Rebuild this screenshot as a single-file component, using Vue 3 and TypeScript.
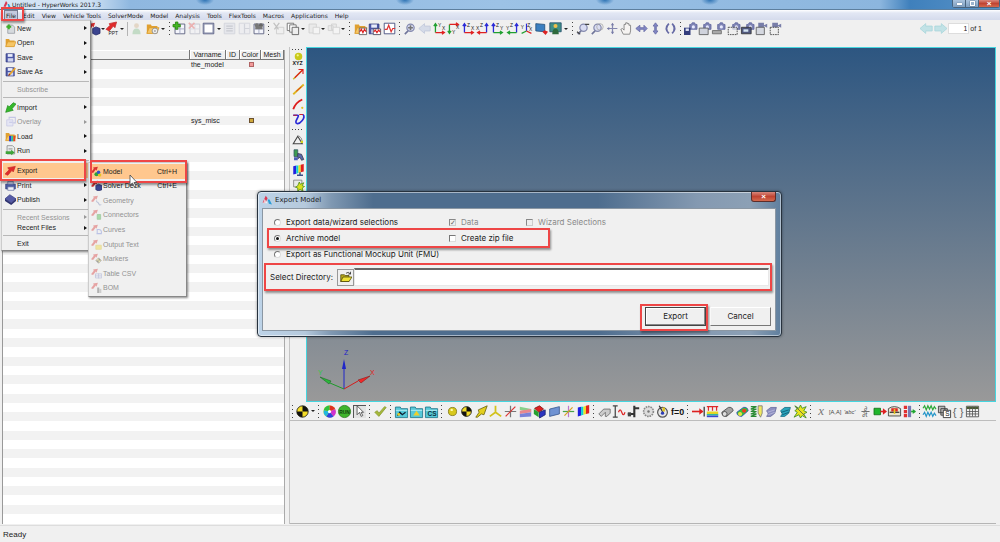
<script setup lang="ts">
import { ref } from 'vue'

const line = (d: string, c = '#333', w = 1.5) =>
  `<path d="${d}" fill="none" stroke="${c}" stroke-width="${w}"/>`
const fill = (d: string, c: string, s = 'none') => `<path d="${d}" fill="${c}" stroke="${s}"/>`

const folder =
  fill('M1 3h5l1 2h7v9H1z', '#e0a030') + fill('M1 14l3-7h12l-3 7z', '#f6c665', '#d99a2c')
const floppy =
  fill('M1.5 2.5h12v12h-12z', '#4c57a8', '#343d80') + fill('M4 3h7v4H4z', '#e8ecfa') + fill('M4 9h8v5H4z', '#cfd5ee')
const redArrow = fill('M0 13L6 7 4 4 15 2 12 10 10 8 4 15z', '#e02a2a', '#c43030')
const smallRed = fill('M0 9L4 4 3 2 10 1 8 7 7 5 3 10z', '#d93333')
const page = fill('M2.5 2.5h12v12h-12z', '#f4f5fb', '#4d5474') + line('M2.5 8.5h12M8.5 2.5v12', '#9aa0bd', 1)
const lens = '<circle cx="8" cy="7" r="4.5" fill="#d9dcf2" stroke="#858aae" stroke-width="1.5"/>' + line('M5 11L1 15', '#70759a', 2)
const cam =
  fill('M7 3h2l1-2h3l1 2h2v6H7z', '#7f84b4', '#6066a0') + '<circle cx="11.5" cy="6" r="2" fill="#e8eaff"/>'
const cyanFolder = fill('M.5 2.5h6l1 2h8v11H.5z', '#57c8d8', '#1c7387') + fill('M1 6h14v1H1z', '#c4f4f8')
const rainbow =
  fill('M1 3l4-1v11l-4 1z', '#2020e0') + fill('M5 2l3 0v10l-3 1z', '#12d0d0') + fill('M8 2l3-1v10l-3 1z', '#f0e020') + fill('M11 1l4-1v10l-4 1z', '#e02020')
const checker = (r: number) =>
  `<circle cx="8" cy="8" r="${r}" fill="#f4dc28" stroke="#111"/>` +
  fill(`M8 8V${8 - r}A${r} ${r} 0 0 1 ${8 + r} 8z`, '#111') + fill(`M8 8V${8 + r}A${r} ${r} 0 0 1 ${8 - r} 8z`, '#111')
const tx = (t: string, x: number, y: number, s = 6, c = '#222', extra = '') =>
  `<text x="${x}" y="${y}" font-size="${s}" fill="${c}" font-family="Liberation Sans, sans-serif" ${extra}>${t}</text>`
const axes = (corner: [number, number], a: string, b: string, ca: string, cb: string) => {
  const [x, y] = corner
  const vy = y > 8 ? 2 : 14
  const hx = x < 8 ? 14 : 2
  const dy = y > 8 ? 3 : -3
  const dx = x < 8 ? -3 : 3
  return (
    line(`M${x} ${y}V${vy}M${x - 2} ${vy + dy}L${x} ${vy}L${x + 2} ${vy + dy}`, ca, 1.6) +
    line(`M${x} ${y}H${hx}M${hx + dx} ${y - 2}L${hx} ${y}L${hx + dx} ${y + 2}`, cb, 1.6) +
    tx(a, x < 8 ? 6 : 5, y > 8 ? 6 : 15, 6) + tx(b, x < 8 ? 11 : 0, y > 8 ? 10 : 9, 6)
  )
}

const icons: Record<string, string> = {
  new: fill('M4 3h7l3 3v9H4z', '#d6dade', '#8a9096') + fill('M2 4h2V2h3v2h2v3H7v2H4V7H2z', '#3fae2a'),
  open: folder,
  save: floppy,
  saveas: floppy + line('M6 13L15 3', '#e6a32c', 2.6) + line('M5 14l2-2', '#8a2d1c', 2),
  import: fill('M16 3L10 10 12 12 1 15 4 5 6 7 12 1z', '#35b82b', '#1e8c19'),
  overlay: fill('M2.5 5.5h9v9h-9z', '#d6d8fb', '#8589d6') + line('M6 5V2h9v8h-3M6 9h5', '#8589d6'),
  load: folder + fill('M6 7h3v8H6z', '#2233dd') + fill('M9 7h3v8H9z', '#26c0a5') + fill('M12 7h3v8h-3z', '#e24a1f'),
  run: fill('M3 1h8l3 3v9H3z', '#eceff0', '#777') + line('M5 5h6M5 7h6', '#999', 1) + fill('M1 9h8V7l5 4-5 4v-2H1z', '#3fa33a'),
  export: redArrow,
  print: fill('M1 6h14v7H1z', '#4b5ba3', '#303c77') + fill('M4 2h8v4H4z', '#c9cfe8', '#66709d') + fill('M4 10h9v5H4z', '#eef0fa', '#66709d'),
  publish: fill('M0 7L7 1l9 6-7 6z', '#565ba6', '#393d80') + fill('M0 7l9 6 7-6v3l-7 6L0 10z', '#2f3370'),
  xmodel: smallRed + '<circle cx="8" cy="12" r="3" fill="#2da33a"/><circle cx="12.500" cy="13" r="2.600" fill="#e6c321"/><circle cx="11" cy="9" r="2.500" fill="#3151cc"/>',
  xsolver: smallRed + fill('M7 8l4-2 5 2v6l-5 2-4-2z', '#3b448f', '#272e6b'),
  xgeom: smallRed + line('M8 8c0 4 2 1 3 4s2 3 4 2', '#6d7fb5'),
  xconn: smallRed + fill('M9 8h5v7H9z', '#3dbb3d', '#1d881d'),
  xcurve: smallRed + line('M9 15V8h2q5 0 4 6H8', '#6d7fd5'),
  xtext: smallRed + fill('M7 9h8v6H7z', '#f0d62a', '#d1b61a'),
  xmark: smallRed + fill('M11 7l4 4-4 4-4-4z', '#f0e24a', '#555') + fill('M11 7v4h4zM11 15v-4H7z', '#222'),
  xtable: smallRed + fill('M6.500 8.500h9v6h-9z', '#eceffc', '#6d78b8') + line('M6 11.500h9M11 8v7', '#6d78b8', 1),
  xbom: smallRed + fill('M9 8h3v8H9z', '#555') + fill('M12 10h3v6h-3z', '#999'),
  ppt: fill('M0 9L5 4 4 2 13 0 11 7 9 5 4 11z', '#e02a2a', '#c43030') + tx('PPT', 3, 16, 6, '#222'),
  user: '<circle cx="8" cy="4.500" r="3" fill="#c79c67"/>' + fill('M3 15q0-7 5-7t5 7z', '#5fae68'),
  foldergear: folder + '<circle cx="11" cy="11" r="3.500" fill="#eee" stroke="#888"/><circle cx="11" cy="11" r="1" fill="#777"/>',
  pageadd: page + fill('M3 0h3v3h3v3H6v3H3V6H0V3h3z', '#43b621', '#2b8510'),
  pagedel: page + line('M1 1l7 7M8 1L1 8', '#e02222', 2),
  square: fill('M1.500 1.500h13v13h-13z', '#fff', '#3d4470') + line('M2.500 2.500h11v11h-11z', '#707798', 1),
  grid: fill('M1.500 1.500h13v13h-13z', '#cdd1e0', '#8d93ab') + line('M4 5h8M4 8h8M4 11h8', '#6e748c'),
  grid2: fill('M1.500 1.500h13v13h-13z', '#e7e9f2', '#8d93ab') + line('M8 2v12M8 8h6', '#8d93ab'),
  pagefind: page + '<circle cx="6" cy="4" r="2.500" fill="#777"/><circle cx="11" cy="4" r="2.500" fill="#666"/>' + fill('M4 5h9v4H4z', '#777'),
  cut: fill('M5.500 6.500h9v8h-9z', '#eee', '#777') + line('M2 1l6 8M9 1L3 9', '#555'),
  copy: fill('M1.500 1.500h8v9h-8z', '#fff', '#666') + fill('M4.500 3.500h8v9h-8z', '#fff', '#666') + fill('M7.500 6.500h8v9h-8z', '#eee', '#555'),
  paste: fill('M2.500 2.500h9v11h-9z', '#ddd', '#888') + fill('M7.500 6.500h8v8h-8z', '#fff', '#888'),
  multi: fill('M1.500 4.500h6v6h-6zM5.500 2.500h6v7h-6z', '#ddd', '#888') + fill('M7.500 6.500h8v8h-8z', '#fff', '#888'),
  folderwave: folder + fill('M6.500 7.500h9v8h-9z', '#fff', '#555') + line('M7 12l2-3 2 4 2-4 2 3', '#d22'),
  savewave: floppy + fill('M6.500 8.500h9v7h-9z', '#fff', '#445') + line('M7 12l2-2 2 3 2-3 2 2', '#d22'),
  wave: fill('M1.500 1.500h13v13h-13z', '#fff', '#343d73') + line('M2 9l3 0 2-5 3 8 2-4h3', '#e03434'),
  zoomall: lens + fill('M5 6h6v2H5zM7 4h2v6H7z', '#777'),
  back: fill('M1 8l7-6v3h7v6H8v3z', '#d5dbe8', '#c0c8da'),
  prev: fill('M0 8l7-6v3h8v6H7v3z', '#c2e2e6', '#a9d6db'),
  next: fill('M16 8L9 2v3H1v6h8v3z', '#c2e2e6', '#a9d6db'),
  ax1: axes([3, 13], 'Y', 'X', '#20a030', '#e02020'),
  ax2: axes([3, 3], 'Y', 'X', '#20a030', '#e02020'),
  ax3: axes([3, 13], 'Z', 'X', '#2a2ad8', '#e02020'),
  ax4: axes([13, 13], 'Z', 'X', '#2a2ad8', '#e02020'),
  ax5: axes([3, 13], 'Z', 'Y', '#2a2ad8', '#20a030'),
  ax6: axes([13, 13], 'Z', 'Y', '#2a2ad8', '#20a030'),
  ax7: line('M8 11V2', '#2a2ad8') + line('M8 11l-6 3', '#20a030') + line('M8 11l6 3', '#e02020') + tx('Y', 1, 9) + tx('Z', 9, 6) + tx('X', 11, 11),
  paint: fill('M1 2l11 1v9L1 11z', '#3b7fc0', '#234f7a') + fill('M9 12l3-2 4 2-3 4z', '#dd2222'),
  screen: fill('M1 1h14v11H1z', '#3f8f86', '#25506e') + '<circle cx="8" cy="5" r="2.500" fill="#f0c04a"/>' + fill('M4 15q0-7 4-7t4 7z', '#2f6a3c'),
  zoomin: lens + line('M0 12l4 3M10 3h5', '#444'),
  zoomout: lens + '<circle cx="11" cy="6" r="4" fill="none" stroke="#aaa"/>',
  pan: line('M8 2v12M2 8h12', '#8487b0') + fill('M8 1l2 3H6zM8 15l2-3H6zM1 8l3-2v4z', '#777ba6'),
  hand: fill('M4 15L1 9l2-1 2 2V3h2V1h2v1h2v2h2v7l-1 4z', '#f6f4f2', '#777'),
  horiz: fill('M1 8l5-4v3h5V4l4 4-4 4V9H6v3z', '#8287c4', '#666aa5'),
  vert: fill('M8 1l3 4H9v6h2l-3 4-3-4h2V5H5z', '#8287c4', '#666aa5'),
  rotate: line('M6 2Q0 8 6 14M10 2q6 6 0 12', '#666aa5', 2.2),
  cam1: cam + fill('M0 7h8v9H0z', '#333d7d') + fill('M2 8h4v3H2z', '#dfe3f5'),
  cam2: cam + fill('M1.500 7.500h11v8h-11z', '#d0d3dc', '#555'),
  cam3: cam + fill('M.5 10.500h11v4H.5z', '#aaa', '#666'),
  cam4: cam + '<rect x="1.500" y="6.500" width="11" height="9" fill="#eee" fill-opacity=".7" stroke="#333" stroke-dasharray="2 1"/>',
  cam5: cam + fill('M.5 6.500h12v8H.5z', '#51587f', '#333') + fill('M3 9h6v3H3z', '#d3e4f2'),
  cam6: fill('M4 1h7v3l4-2v5l-4-2v2H4z', '#787da8') + fill('M1.500 6.500h10v9h-10z', '#d5d8e0', '#555'),
  cam7: fill('M4 1h7v3l4-2v5l-4-2v2H4z', '#787da8') + '<rect x="1.500" y="6.500" width="10" height="9" fill="#eee" stroke="#333" stroke-dasharray="2 1"/>',
  xyz: '<circle cx="8" cy="4.500" r="5" fill="#c9c91b"/><circle cx="7" cy="3" r="1.500" fill="#f6f68a"/>' + tx('XYZ', 0, 16, 7, '#111', 'font-weight="bold"'),
  vec: line('M1 15L13 3', '#c9b820', 2) + line('M3 13L14 2M8 2h6v6', '#dd2222'),
  seg: line('M1 15L15 2', '#e0b820', 2.4) + line('M5 11L12 5', '#dd2222', 1.2),
  arc: line('M1 15Q4 6 13 2', '#dd1c1c', 2.4) + '<circle cx="13" cy="13" r="1.500" fill="#e0c020"/>',
  curve: line('M1 3h6Q9 3 6 8T6 14t7-4 1-8', '#2b2bd6', 2.2) + line('M1 3h5M14 2H9', '#cc2233', 1.6),
  angle: line('M1 13L7 3l6 10z', '#444') + line('M8 2q5 3 5 8', '#777', 1) + fill('M11 9l3 0v3h-3z', '#d7d721'),
  blocks: fill('M2 1h5v9H2z', '#3d9d50', '#356') + fill('M7 6l5 1 3 7-3 1-2-4-3 2z', '#596aac', '#334') + fill('M2 11h5v4H2z', '#4c5fb5'),
  display: rainbow + line('M10 11v4M6 15h8', '#3a4e87', 2),
  magic: fill('M1.500 1.500h11v9h-11z', '#e7e9e7', '#777') + fill('M9 4l1.500 3L15 5l-2 4 3 1-3 2 1 4-4-2-3 2 0-4-3-1 3-2z', '#d9e020', '#4a8a10'),
  solid: checker(7),
  wheel: '<circle cx="8" cy="8" r="7.500" fill="#e8e020"/>' + fill('M8 8V0.500A7.500 7.500 0 0 1 15 5z', '#e03020') + fill('M8 8L15 5A7.500 7.500 0 0 1 13 14z', '#d030d0') + fill('M8 8L13 14A7.500 7.500 0 0 1 4 14z', '#3040e0') + fill('M8 8L4 14A7.500 7.500 0 0 1 1 6z', '#20b8e0') + fill('M8 8L1 6A7.500 7.500 0 0 1 8 .5z', '#30c040') + '<circle cx="8" cy="8" r="2" fill="#fff"/>',
  run2: '<circle cx="8" cy="8" r="7.500" fill="#3fb52c" stroke="#2a7a1c"/>' + tx('RUN', 1.5, 10.5, 6, '#114010', 'font-weight="bold"'),
  pointer: fill('M5 1v11l3-3 2 5 2-1-2-4h3z', '#fff', '#444'),
  check: fill('M1 9l3-2 2 3 7-8 2 1L6 14z', '#a5b83a', '#8b9c30'),
  cy1: cyanFolder + line('M3 13l3-4 3 3 4-3', '#123', 1.6) + fill('M3 10h3v3H3z', '#f0d020'),
  cy2: cyanFolder + fill('M8 7l4 6H4z', '#f2cf28'),
  cy3: cyanFolder + tx('CS', 3, 14, 8, '#0d3340', 'font-weight="bold"'),
  ball: '<circle cx="8" cy="8" r="5" fill="#d8c81c" stroke="#7d7410"/><circle cx="7" cy="6" r="1.500" fill="#fffbb0"/>',
  ball2: checker(6),
  yarrow: fill('M1 15l4-6-1-3L15 1 11 12l-3-1-5 4z', '#e3cf1f', '#6a6210'),
  tri: line('M8 1v8M8 9l-7 5M8 9l7 5', '#d2c21d', 2.2),
  cross: line('M1 8h14M8 1v14', '#777') + line('M2 14L14 2', '#dd3333'),
  planes: fill('M1 2l14 3v4L1 6z', '#88d08a') + fill('M1 7l14-2v4L1 11z', '#e8878e') + fill('M1 11l14-2v5L1 15z', '#7a82d8'),
  cube: fill('M2 4l6-3 5 4-6 4z', '#dd2020', '#801010') + fill('M1 5l6 4v6l-6-4z', '#24a030') + fill('M8 9l7-3v6l-7 4z', '#2b34c0', '#15206a'),
  plane: fill('M2 5l12-3v9L2 14z', '#6f92d2', '#39588f'),
  multiax: line('M8 1v14', '#bb77cc') + line('M1 8h14', '#49a349') + line('M3 13L13 3', '#d8a020'),
  rain: rainbow,
  sect: fill('M1 11l6-6h8v5l-4 4H9V9l-5 5z', '#ccc', '#666'),
  plot: line('M1 1h6M1 15h6M4 1v14', '#444') + line('M8 9q2-6 4 0t4 0', '#dd2222'),
  clamp: line('M9 1v14M9 4h6M1 11h8', '#333', 2.6) + fill('M1 9h4v5H1z', '#444'),
  gear: '<circle cx="8" cy="8" r="6" fill="#ddd" stroke="#888" stroke-dasharray="2 1" stroke-width="2"/><circle cx="8" cy="8" r="1.500" fill="#777"/>',
  timer: '<circle cx="8" cy="9" r="6" fill="#e6e6e6" stroke="#555" stroke-width="1.500"/>' + line('M4 1l5 9', '#333') + fill('M8 3h3v5H8z', '#e0c420') + '<circle cx="8" cy="10" r="2" fill="#2b3bb5"/>',
  f0: tx('f=0', 0, 12, 11, '#111', 'font-weight="bold"'),
  load1: line('M0 8h13', '#dd2020', 2) + fill('M9 4l5 4-5 4z', '#dd2020') + line('M15 2v12', '#333'),
  press: line('M1 2h14M3 2v5M8 2v5M13 2v5', '#dd2a2a') + fill('M1 8h14v4H1z', '#e8d820') + fill('M1 11h14v2H1z', '#30b8a0') + fill('M1 13h14v2H1z', '#3a48d0'),
  cyl: fill('M1 9l8-6q5-1 6 4l-8 7q-6 0-6-5z', '#a3a3a3', '#444') + '<circle cx="4.500" cy="11" r="3" fill="#ddd" stroke="#444"/>',
  cylc: fill('M1 9l8-6q5-1 6 4l-8 7q-6 0-6-5z', '#37c23a', '#3344bb') + '<circle cx="10" cy="7" r="2.500" fill="#ee3a20"/><circle cx="5" cy="11" r="2.500" fill="#e8e040"/>',
  spring: line('M1 2h7L1 5h7L1 8h7l-7 3h7l-7 3h7', '#2a8a34') + fill('M10 1h5v9l-2 5-3-5z', '#f0e860', '#777'),
  shell: fill('M2 7l5-4h7l-2 7-5 4H2l2-3z', '#8c8fc0', '#666a9c') + line('M3 9l9-3M4 12l8-3', '#bbd', 1),
  shell2: fill('M2 7l5-4h7l-2 7-5 4H2l2-3z', '#29a6bd', '#156a80') + line('M3 9l9-3M4 12l8-3', '#0d5570', 1),
  burst: fill('M1 1l5 3 2-4 2 4 5-2-3 5 4 2-4 2 3 5-5-3-2 3-2-4-6 3 4-6-3-2 3-2z', '#e8e41c', '#3c8a20') + line('M2 2l11 11', '#555', 1),
  x: `<text x="4" y="12" font-size="16" font-style="italic" fill="#777" font-family="Liberation Serif, serif">x</text>`,
  aa: tx('[A,A]', 0, 11, 7, '#444'),
  abc: tx("'abc'", 0, 11, 7, '#444', 'font-style="italic"'),
  frac: tx('∂', 6, 7, 8, '#555') + line('M3 8h10', '#555', 1) + tx('∂t', 4, 15, 8, '#555'),
  flow: fill('M0 4h8v8H0z', '#1fb52b', '#127018') + line('M8 8h5', '#dd2020', 2) + fill('M11 4l5 4-5 4z', '#dd2020'),
  gauge: fill('M.5 4.500q7-5 15 0v9H.5z', '#e9e4cd', '#333') + fill('M4 4h8v4H4z', '#dd2525') + line('M2 9h12', '#333') + fill('M7 5h2v6H7z', '#e8c820'),
  bars: fill('M1 1h4v4H1zM1 6h4v4H1zM1 11h4v4H1z', '#e03030') + fill('M6 1h4v14H6z', '#7679b0') + line('M10 8h5', '#1fa530', 2) + fill('M12 5l4 3-4 3z', '#1fa530'),
  waves: line('M0 4l2-3 2 5 2-5 2 4 2-4 2 5 2-4 2 3', '#2eaa3a') + line('M0 12l2-3 2 5 2-5 2 4 2-4 2 5 2-4 2 3', '#2596c8'),
  stack: fill('M.5 1.500h8v8h-8zM3.500 4.500h8v8h-8z', '#bbb', '#333') + fill('M6.500 6.500h9v9h-9z', '#fff', '#222') + tx('S', 9, 14, 8, '#111'),
  braces: tx('{ }', 1, 13, 14, '#666'),
  table: fill('M.5 1.500h15v13H.5z', '#f5f5f5', '#444') + fill('M1 2h14v3H1z', '#4b5b33') + line('M1 8h14M1 11h14M4.500 2v12M8 2v12M11.500 2v12', '#555', 1),
}

interface Item { label: string; icon?: string; off?: boolean; sub?: boolean; keys?: string; hot?: boolean }
const menus = ['File', 'Edit', 'View', 'Vehicle Tools', 'SolverMode', 'Model', 'Analysis', 'Tools', 'FlexTools', 'Macros', 'Applications', 'Help']
const fileMenu: { cls: string; items: Item[] }[] = [
  { cls: 'four', items: [
    { label: 'New', icon: 'new', sub: true }, { label: 'Open', icon: 'open', sub: true },
    { label: 'Save', icon: 'save', sub: true }, { label: 'Save As', icon: 'saveas', sub: true } ] },
  { cls: 'one', items: [{ label: 'Subscribe', off: true }] },
  { cls: 'four', items: [
    { label: 'Import', icon: 'import', sub: true }, { label: 'Overlay', icon: 'overlay', sub: true, off: true },
    { label: 'Load', icon: 'load', sub: true }, { label: 'Run', icon: 'run', sub: true } ] },
  { cls: 'three', items: [
    { label: 'Export', icon: 'export', hot: true }, { label: 'Print', icon: 'print', sub: true },
    { label: 'Publish', icon: 'publish', sub: true } ] },
  { cls: 'two', items: [{ label: 'Recent Sessions', off: true, sub: true }, { label: 'Recent Files', sub: true }] },
  { cls: 'last', items: [{ label: 'Exit' }] },
]
const exportMenu: Item[] = [
  { label: 'Model', icon: 'xmodel', keys: 'Ctrl+H', hot: true },
  { label: 'Solver Deck', icon: 'xsolver', keys: 'Ctrl+E' },
  { label: 'Geometry', icon: 'xgeom', off: true },
  { label: 'Connectors', icon: 'xconn', off: true },
  { label: 'Curves', icon: 'xcurve', off: true },
  { label: 'Output Text', icon: 'xtext', off: true },
  { label: 'Markers', icon: 'xmark', off: true },
  { label: 'Table CSV', icon: 'xtable', off: true },
  { label: 'BOM', icon: 'xbom', off: true },
]

/* ":" grip, "|" rule, "v" drop arrow, "~name" disabled, "=name" pressed */
interface Group { w: number; t: string[] }
const g = (w: number, s: string): Group => ({ w, t: s.split(' ') })
const topBar = [
  g(40, 'xsolver v ppt v'),
  g(41, '| ~user foldergear v'),
  g(99, ': pageadd ~pagedel square v ~grid ~grid2 pagefind'),
  g(81, ': ~cut copy v ~paste v ~multi v'),
  g(50, ': folderwave savewave wave'),
  g(173, ': zoomall back ax1 ax2 ax3 ax4 ax5 ax6 ax7 paint screen v'),
  g(108, ': zoomin zoomout pan hand horiz vert rotate'),
  g(105, ': cam1 cam2 cam3 cam4 cam5 cam6 cam7'),
]
const lowBar = [
  g(26, ': solid v'),
  g(51, ': wheel run2 =pointer'),
  g(21, ': check'),
  g(51, ': cy1 cy2 cy3'),
  g(152, ': ball ball2 yarrow tri cross planes cube plane multiax rain'),
  g(94, ': sect plot clamp gear timer f0'),
  g(123, ': load1 press cyl cylc spring shell shell2 burst'),
  g(109, ': x aa abc frac flow gauge bars'),
  g(63, ': waves stack braces table'),
]
const sideBar = ['xyz', 'vec', 'seg', 'arc', 'curve']
const sideBar2 = ['angle', 'blocks', 'display', 'magic']

const rows = Array.from({ length: 50 }, (_, i) =>
  i === 0 ? { name: 'the_model', color: 'pink' } : i === 6 ? { name: 'sys_misc', color: 'gold' } : { name: '', color: '' })

const mode = ref('archive')
const zip = ref(false)
const data = ref(true)
const wizard = ref(false)
const directory = ref('')
const pageNo = ref('1')
</script>

<template>
  <div class="window">
    <header class="title">
      <svg class="logo" viewBox="0 0 16 16"><path d="M6 1L1 12l4 1 4-8z" fill="#d93a55" /><path d="M9 7l2 7 5 1-4-8z" fill="#2a9ed8" /></svg>
      <h1>Untitled - HyperWorks 2017.3</h1>
      <div class="winbtns">
        <button aria-label="Minimize"><i class="min"></i></button>
        <button aria-label="Restore"><i class="max"></i></button>
        <button class="close" aria-label="Close">×</button>
      </div>
    </header>

    <nav class="menubar">
      <button v-for="m in menus" :key="m" :class="{ active: m === 'File' }">{{ m }}<span v-if="m === 'File'" class="mark"></span></button>
    </nav>

    <div class="toolbar top">
      <div v-for="(grp, i) in topBar" :key="i" class="group" :style="{ width: grp.w + 'px' }">
        <template v-for="(t, k) in grp.t" :key="k">
          <span v-if="t === ':'" class="grip"></span>
          <span v-else-if="t === '|'" class="rule"></span>
          <button v-else-if="t === 'v'" class="drop" aria-label="More"></button>
          <button v-else class="tool" :class="{ faded: t[0] === '~' }" :aria-label="t">
            <svg viewBox="0 0 16 16" v-html="icons[t.replace('~', '')]"></svg>
          </button>
        </template>
      </div>
      <div class="pager">
        <button class="tool" aria-label="Previous page"><svg viewBox="0 0 16 16" v-html="icons.prev"></svg></button>
        <button class="tool" aria-label="Next page"><svg viewBox="0 0 16 16" v-html="icons.next"></svg></button>
        <input id="page" v-model="pageNo" type="text" />
        <label for="page">of 1</label>
      </div>
    </div>

    <main>
      <section class="browser">
        <table>
          <thead>
            <tr><th class="c1"></th><th class="c2">Varname</th><th class="c3">ID</th><th class="c4">Color</th><th class="c5">Mesh</th></tr>
          </thead>
          <tbody>
            <tr v-for="(r, i) in rows" :key="i">
              <td></td>
              <td>{{ r.name }}</td>
              <td></td>
              <td class="mid"><i v-if="r.color" class="chip" :class="r.color"></i></td>
              <td></td>
            </tr>
          </tbody>
        </table>
      </section>

      <section class="work">
        <div class="stage">
          <div class="side">
            <span class="hgrip"></span>
            <button v-for="s in sideBar" :key="s" class="tool" :aria-label="s"><svg viewBox="0 0 16 16" v-html="icons[s]"></svg></button>
            <span class="hgrip second"></span>
            <button v-for="s in sideBar2" :key="s" class="tool" :aria-label="s"><svg viewBox="0 0 16 16" v-html="icons[s]"></svg></button>
          </div>
          <div class="canvas">
            <svg class="triad" viewBox="0 0 64 48">
              <path d="M28 42V20" stroke="#2026c8" />
              <path d="M28 12l2 10h-4z" fill="#2026c8" />
              <path d="M28 42l14-8" stroke="#d41c1c" />
              <path d="M54 29l-9 7-3-3z" fill="#f02828" stroke="#801010" stroke-width=".5" />
              <path d="M28 42L14 36" stroke="#1d9a2a" />
              <path d="M4 30l11 4-2 3z" fill="#2bb83a" stroke="#125f1a" stroke-width=".5" />
              <text x="28" y="8" fill="#1c22c8">Z</text>
              <text x="2" y="28" fill="#35c745">Y</text>
              <text x="54" y="28" fill="#e02020">X</text>
            </svg>
          </div>
        </div>
        <div class="toolbar low">
          <div v-for="(grp, i) in lowBar" :key="i" class="group" :style="{ width: grp.w + 'px' }">
            <template v-for="(t, k) in grp.t" :key="k">
              <span v-if="t === ':'" class="grip"></span>
              <button v-else-if="t === 'v'" class="drop" aria-label="More"></button>
              <button v-else class="tool" :class="{ pressed: t[0] === '=' }" :aria-label="t">
                <svg viewBox="0 0 16 16" v-html="icons[t.replace('=', '')]"></svg>
              </button>
            </template>
          </div>
        </div>
        <div class="panel"></div>
      </section>
    </main>

    <footer>Ready</footer>

    <div class="menu file" role="menu">
      <div v-for="(sec, i) in fileMenu" :key="i" class="sec" :class="sec.cls">
        <button v-for="it in sec.items" :key="it.label" class="item" :class="{ hot: it.hot }" :disabled="it.off" role="menuitem">
          <span class="ico"><svg v-if="it.icon" viewBox="0 0 16 16" v-html="icons[it.icon]"></svg></span>
          <span class="lbl">{{ it.label }}</span>
          <i v-if="it.sub" class="arrow"></i>
          <span v-if="it.hot" class="mark"></span>
        </button>
      </div>
    </div>

    <div class="menu export" role="menu">
      <button v-for="it in exportMenu" :key="it.label" class="item" :class="{ hot: it.hot }" :disabled="it.off" role="menuitem">
        <span class="ico"><svg v-if="it.icon" viewBox="0 0 16 16" v-html="icons[it.icon]"></svg></span>
        <span class="lbl">{{ it.label }}</span>
        <span v-if="it.keys" class="keys">{{ it.keys }}</span>
        <span v-if="it.hot" class="mark"></span>
      </button>
    </div>
    <svg class="cursor" viewBox="0 0 9 14"><path d="M1 1v10l2.500-2 2 4 1.500-1-2-3.500h3z" fill="#fff" stroke="#444" stroke-width=".8" /></svg>

    <form class="dialog" role="dialog" aria-labelledby="dlg" @submit.prevent>
      <header>
        <svg class="logo" viewBox="0 0 16 16"><path d="M6 1L1 12l4 1 4-8z" fill="#d93a55" /><path d="M4 6l5 7H2z" fill="#fff" opacity=".7" /><path d="M9 7l2 7 5 1-4-8z" fill="#2a9ed8" /></svg>
        <h2 id="dlg">Export Model</h2>
        <button type="button" class="close" aria-label="Close dialog">×</button>
      </header>
      <div class="content">
        <div class="opt">
          <label class="a"><input v-model="mode" type="radio" name="mode" value="data" />Export data/wizard selections</label>
          <label class="b off"><input v-model="data" type="checkbox" disabled />Data</label>
          <label class="off"><input v-model="wizard" type="checkbox" disabled />Wizard Selections</label>
        </div>
        <div class="opt">
          <label class="a"><input v-model="mode" type="radio" name="mode" value="archive" />Archive model</label>
          <label class="b"><input v-model="zip" type="checkbox" />Create zip file</label>
          <span class="mark"></span>
        </div>
        <div class="opt">
          <label class="a"><input v-model="mode" type="radio" name="mode" value="fmu" />Export as Functional Mockup Unit (FMU)</label>
        </div>
        <div class="dir">
          <label for="dir">Select Directory:</label>
          <button type="button" class="browse" aria-label="Browse">
            <svg viewBox="0 0 16 16"><path d="M1 5h5l1 1h5v8H1z" fill="#b8a81c" stroke="#4c4608" /><path d="M1 14l3-6h12l-4 6z" fill="#efe236" stroke="#4c4608" /><path d="M8 3q3-3 6 1M14 1v3h-3" fill="none" stroke="#222" /></svg>
          </button>
          <input id="dir" v-model="directory" type="text" />
          <span class="mark"></span>
        </div>
        <div class="actions">
          <button type="submit" class="primary">Export<span class="mark"></span></button>
          <button type="button">Cancel</button>
        </div>
      </div>
    </form>
  </div>
</template>

<style>
html, body { margin: 0; background: #f0f0f0; }
</style>

<style scoped>
* { box-sizing: border-box; }
.window {
  position: relative; min-height: 100vh; display: flex; flex-direction: column; overflow: hidden;
  background: #f0f0f0; color: #1c1c1c; font: 7px/9px "Liberation Sans", Arial, sans-serif;
}
button { margin: 0; padding: 0; border: 0; background: none; color: inherit; font: inherit; }
input { margin: 0; font: inherit; color: inherit; }
svg { display: block; }
h1, h2 { margin: 0; font-weight: normal; white-space: nowrap; }

.title {
  height: 10px; flex: none; display: flex; align-items: center; padding-left: 3px;
  border-bottom: 1px solid #5d7f9e;
  background:
    radial-gradient(ellipse 9px 5px at 20.5% 0, #2f74b4, transparent),
    radial-gradient(ellipse 9px 5px at 40.5% 0, #2f74b4, transparent),
    radial-gradient(ellipse 9px 5px at 60.5% 0, #2f74b4, transparent),
    radial-gradient(ellipse 9px 5px at 71% 0, #2f74b4, transparent),
    linear-gradient(90deg, #d5e5f5 0, #cfe1f3 9%, #8fb8e0 13%, #9cc2e6 50%, #8cb6de 88%, #3f80bc 91%, #5a94c8 100%);
}
.title .logo { width: 8px; height: 9px; margin-right: 1px; }
.title h1 { font: 6px/8px "DejaVu Sans", sans-serif; }
.winbtns { display: flex; margin-left: auto; align-self: flex-start; height: 8px; border: 1px solid #48637d; border-top: 0; border-radius: 0 0 3px 3px; }
.winbtns button { width: 13px; background: linear-gradient(#a9c3de, #7f9fc0); border-right: 1px solid #48637d; display: grid; place-items: center; }
.winbtns .close { width: 20px; border: 0; }
.winbtns i { display: block; width: 5px; background: #fff; height: 2px; box-shadow: 0 0 1px #234; }
.winbtns .max { height: 5px; width: 5px; background: #9cb4ce; border: 1px solid #fff; }
.close, .winbtns .close { background: linear-gradient(#d9877b, #c04432 50%, #d4694d); color: #fff; font: bold 8px/7px "Liberation Sans", sans-serif; }

.menubar {
  height: 10px; flex: none; display: flex; gap: 7px; padding-left: 4px;
  font: 6px/9px "DejaVu Sans", sans-serif;
  background: linear-gradient(#fff, #e2e7f4 30%, #d5dbec);
}
.menubar button { position: relative; white-space: nowrap; }
.menubar .active { width: 14px; margin-right: -2px; background: #c4cade; box-shadow: inset 0 0 0 1px #777d92; }
.mark { position: absolute; border: 2px solid #ee4646; box-shadow: 1px 2px 2px rgba(0, 0, 0, .4); pointer-events: none; z-index: 5; }
.menubar .mark { inset: -3px -6px -1px -3px; }

.toolbar { display: flex; align-items: center; flex: none; }
.toolbar.top { height: 17px; padding-left: 87px; }
.toolbar.low { height: 19px; padding-left: 1px; border-bottom: 1px solid #bdbdbd; }
.group { display: flex; align-items: center; justify-content: space-between; padding-right: 2px; flex: none; }
.grip { width: 4px; height: 13px; background: repeating-linear-gradient(#444 0 1px, transparent 1px 4px) 1px 0 / 1px 13px no-repeat; }
.rule { width: 1px; height: 14px; background: #b4b4b4; }
.tool { width: 13px; height: 13px; flex: none; }
.tool svg { width: 13px; height: 13px; overflow: visible; }
.tool.faded { opacity: .3; }
.tool.pressed { box-shadow: inset 1px 1px 0 #555; background: #e3e3e3; }
.drop { width: 5px; height: 13px; flex: none; display: grid; place-items: center; }
.drop::before { content: ""; border: 2px solid transparent; border-top-color: #222; border-bottom: 0; }
.pager { margin-left: auto; display: flex; align-items: center; gap: 1px; padding-right: 18px; white-space: nowrap; }
.pager input { width: 21px; height: 11px; border: 1px solid #ddd; background: #fff; text-align: right; padding: 0 1px; }

main { flex: 1; display: flex; padding: 10px 4px 0 2px; min-height: 0; }
.browser { width: 283px; flex: none; margin-top: 3px; border-left: 1px solid #999; border-right: 1px solid #aaa; background: #fff; display: flex; }
table { width: 100%; border-collapse: separate; border-spacing: 0; table-layout: fixed; }
th { height: 10px; padding: 0; font-weight: normal; line-height: 9px; background: #f0f0f0; border: solid #777; border-width: 0 1px 1px 0; box-shadow: inset 1px 1px 0 #fff; white-space: nowrap; }
td { height: 9px; padding: 0 0 0 1px; line-height: 9px; white-space: nowrap; }
tbody tr:nth-child(odd) { background: #f2f2f2; }
.c2 { width: 36px; } .c3 { width: 14px; } .c4 { width: 21px; } .c5 { width: 23px; }
.mid { text-align: center; }
.chip { display: block; width: 5px; height: 5px; margin: 0 auto; border: 1px solid #6d5230; }
.pink { background: #f29a9a; border-color: #b06464; }
.gold { background: #cfa83a; }

.work { flex: 1; min-width: 0; display: flex; flex-direction: column; margin-left: 4px; border-left: 1px solid #c4c4c4; }
.stage { flex: 356; display: flex; min-height: 0; }
.side { width: 16px; flex: none; display: flex; flex-direction: column; align-items: center; gap: 2px; padding-top: 2px; }
.side .tool { height: 12px; }
.side .tool svg { height: 12px; }
.side .tool + .tool { margin-top: 1px; }
.hgrip { width: 12px; height: 2px; background: repeating-linear-gradient(90deg, #444 0 1px, transparent 1px 3px) 0 0 / 12px 1px no-repeat; }
.second { margin: 2px 0 1px; }
.canvas { flex: 1; border: 1px solid #45d5df; background: linear-gradient(#2d5681, #999); display: flex; align-items: flex-end; padding: 0 0 6px 9px; }
.triad { width: 64px; height: 48px; font: 7px "Liberation Sans", sans-serif; fill: none; }
.panel { flex: 102; border-bottom: 1px solid #b5b5b5; }
footer { height: 17px; flex: none; margin-top: 1px; border-top: 1px solid #ddd; padding: 3px; font: 8px/11px "Liberation Sans", sans-serif; }

.menu { position: absolute; background: #f0f0f0; border: 1px solid #a9a9a9; border-color: #ccc #888 #888 #ccc; box-shadow: 1px 1px 2px rgba(0, 0, 0, .45); display: flex; flex-direction: column; }
.menu.file { left: 1px; top: 20px; width: 90px; z-index: 2; }
.menu.export { left: 88px; top: 162px; width: 99px; height: 135px; padding: 1px 1px; z-index: 3; }
.sec { display: flex; flex-direction: column; padding: 2px 0; margin: 0 1px; box-sizing: content-box; }
.sec + .sec { border-top: 1px solid #b8b8b8; }
.four { height: 58px; } .one { height: 15px; padding: 0; } .three { height: 44px; } .two { height: 21px; } .last { height: 12px; padding: 1px 0; }
.four:first-child { padding-top: 0; }
.item { position: relative; flex: 1; min-height: 0; display: flex; align-items: center; text-align: left; white-space: nowrap; }
.item:disabled { color: #939393; }
.item:disabled svg { opacity: .4; }
.ico { width: 14px; flex: none; padding-left: 2px; }
.export .ico { width: 13px; padding-left: 1px; }
.ico svg { width: 11px; height: 11px; }
.lbl { flex: 1; }
.export .item { padding-right: 8px; }
.arrow { border: 2px solid transparent; border-left: 3px solid #111; border-right: 0; margin-right: 2px; }
.item:disabled .arrow { border-left-color: #999; }
.hot { background: #ffc78e; }
.file .hot .mark { inset: -4px 3px -3px -3px; }
.export .hot .mark { inset: -4px -2px -4px 0; }
.cursor { position: absolute; left: 129px; top: 174px; width: 9px; height: 14px; z-index: 6; }

.dialog {
  position: absolute; left: 257px; top: 191px; width: 525px; height: 146px; z-index: 4;
  display: flex; flex-direction: column; padding: 0 5px 5px 4px;
  border: 1px solid #27323e; border-radius: 4px;
  box-shadow: inset 0 0 0 1px rgba(255, 255, 255, .5), 0 0 3px rgba(0, 0, 0, .4);
  background: linear-gradient(90deg, #bdd3e8 0, #b5c9dc 9%, #7f98b2 14%, #4e6d8e 22%, #4e6d8e 65%, #8499b1 84%, #8ca0b5 94%, #607f9e 100%);
  font: 8px/11px Inter, "Liberation Sans", sans-serif;
}
.dialog header { height: 16px; flex: none; display: flex; align-items: center; }
.dialog .logo { width: 10px; height: 10px; margin-right: 3px; }
.dialog h2 { font: 7px/12px "DejaVu Sans", sans-serif; }
.dialog header .close { margin-left: auto; align-self: flex-start; width: 25px; height: 10px; border: 1px solid #5c2d2a; border-top: 0; border-radius: 0 0 3px 3px; }
.content { flex: 1; background: #f0f0f0; border: 1px solid #8b97a3; display: flex; flex-direction: column; padding: 5px 4px 4px 7px; }
.opt { position: relative; height: 16px; flex: none; display: flex; align-items: center; padding-left: 4px; }
.opt label { display: flex; align-items: center; gap: 5px; white-space: nowrap; }
.opt .a { width: 175px; }
.opt .b { width: 77px; }
.off { color: #8a8a8a; }
.opt input { appearance: none; width: 7px; height: 7px; flex: none; background: #fff; border: 1px solid; border-color: #777 #ddd #ddd #777; display: grid; place-items: center; }
.opt input[type="radio"] { border-radius: 50%; }
.opt input[type="radio"]:checked::before { content: ""; width: 3px; height: 3px; border-radius: 50%; background: #111; }
.opt input:disabled { background: #eee; border-color: #888 #ccc #ccc #888; }
.opt input[type="checkbox"]:checked::before { content: "✓"; color: #666; font: bold 7px/6px "DejaVu Sans", sans-serif; }
.opt .mark { left: -3px; top: -2px; width: 283px; height: 20px; }
.dir { position: relative; display: flex; align-items: center; height: 18px; margin-top: 6px; flex: none; }
.dir label { width: 67px; white-space: nowrap; }
.browse { width: 17px; height: 17px; border: 1px solid #999; display: grid; place-items: center; }
.browse svg { width: 12px; height: 12px; }
.dir input { flex: 1; min-width: 0; height: 18px; background: #fff; border: 1px solid #e8e8e8; border-top: 2px solid #666; margin-right: 2px; }
.dir .mark { inset: -5px -1px -5px -6px; }
.actions { margin-top: auto; display: flex; justify-content: flex-end; gap: 4px; }
.actions button { position: relative; width: 61px; height: 19px; border: 1px solid; border-color: #fff #777 #777 #fff; background: #f0f0f0; }
.actions .primary { border: 1px solid #444; box-shadow: inset -1px -1px 0 #888, inset 1px 1px 0 #fff; }
.actions .mark { inset: -4px -3px -6px -6px; }
</style>
